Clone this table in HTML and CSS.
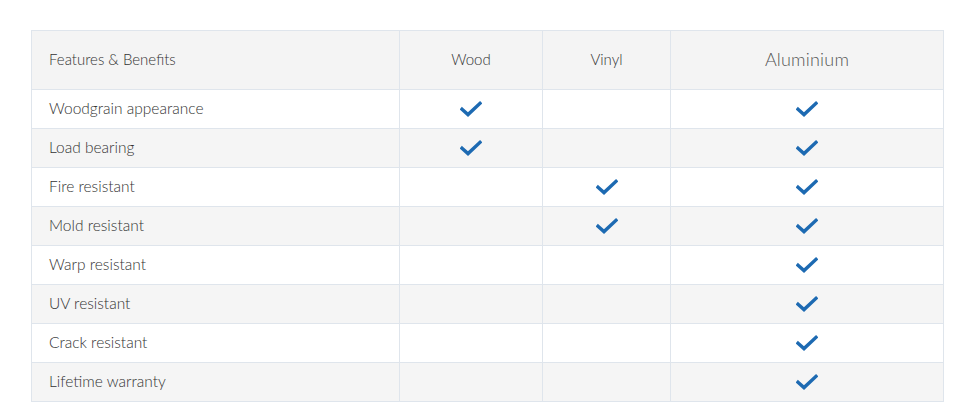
FILE: index.html
```html
<!DOCTYPE html>
<html lang="en">
<head>
<meta charset="utf-8">
<title>Features & Benefits</title>
<link rel="stylesheet" href="styles.css">
</head>
<body>
<svg width="0" height="0" class="defs" aria-hidden="true">
  <symbol id="chk" viewBox="0 0 22 16">
    <path d="M2 8.2 L8 13.6 L20 2.4" fill="none" stroke="currentColor" stroke-width="3.4" stroke-linecap="square" stroke-linejoin="miter"/>
  </symbol>
</svg>
<div class="wrap">
<table class="cmp">
  <colgroup>
    <col class="c1"><col class="c2"><col class="c3"><col class="c4">
  </colgroup>
  <thead>
    <tr>
      <th class="feat">Features &amp; Benefits</th>
      <th>Wood</th>
      <th>Vinyl</th>
      <th class="alu">Aluminium</th>
    </tr>
  </thead>
  <tbody>
    <tr><td class="feat">Woodgrain appearance</td><td><svg class="ck"><use href="#chk"/></svg></td><td></td><td><svg class="ck"><use href="#chk"/></svg></td></tr>
    <tr><td class="feat">Load bearing</td><td><svg class="ck"><use href="#chk"/></svg></td><td></td><td><svg class="ck"><use href="#chk"/></svg></td></tr>
    <tr><td class="feat">Fire resistant</td><td></td><td><svg class="ck"><use href="#chk"/></svg></td><td><svg class="ck"><use href="#chk"/></svg></td></tr>
    <tr><td class="feat">Mold resistant</td><td></td><td><svg class="ck"><use href="#chk"/></svg></td><td><svg class="ck"><use href="#chk"/></svg></td></tr>
    <tr><td class="feat">Warp resistant</td><td></td><td></td><td><svg class="ck"><use href="#chk"/></svg></td></tr>
    <tr><td class="feat">UV resistant</td><td></td><td></td><td><svg class="ck"><use href="#chk"/></svg></td></tr>
    <tr><td class="feat">Crack resistant</td><td></td><td></td><td><svg class="ck"><use href="#chk"/></svg></td></tr>
    <tr><td class="feat">Lifetime warranty</td><td></td><td></td><td><svg class="ck"><use href="#chk"/></svg></td></tr>
  </tbody>
</table>
</div>
</body>
</html>
```
FILE: styles.css
```css
html, body {
  margin: 0;
  padding: 0;
  background: #ffffff;
}
.defs {
  position: absolute;
  width: 0;
  height: 0;
  overflow: hidden;
}
.wrap {
  padding: 30px 0 0 31px;
}
.cmp {
  border-collapse: collapse;
  table-layout: fixed;
  width: 912px;
  font-family: Lato, "Open Sans", sans-serif;
  font-weight: 300;
  color: #333333;
  font-size: 15.5px;
}
.c1 { width: 368px; }
.c2 { width: 143px; }
.c3 { width: 128px; }
.c4 { width: 273px; }
.cmp th, .cmp td {
  border: 1px solid #dfe5ec;
  height: 38px;
  padding: 0 0 2px 0;
  box-sizing: border-box;
  text-align: center;
  vertical-align: middle;
}
.cmp td { height: 39px; }
.cmp th {
  height: 59px;
  font-size: 15px;
  font-weight: 300;
  background: #f4f4f4;
}
.cmp th.alu {
  font-size: 18px;
  color: #555555;
  letter-spacing: 0.2px;
}
.cmp .feat {
  text-align: left;
  padding-left: 17px;
}
.cmp tbody tr:nth-child(even) td {
  background: #f5f5f5;
}
.cmp td .ck {
  margin-top: 1px;
}
.ck {
  display: block;
  margin: 0 auto;
  width: 22px;
  height: 16px;
  color: #1d6ab2;
}
```
